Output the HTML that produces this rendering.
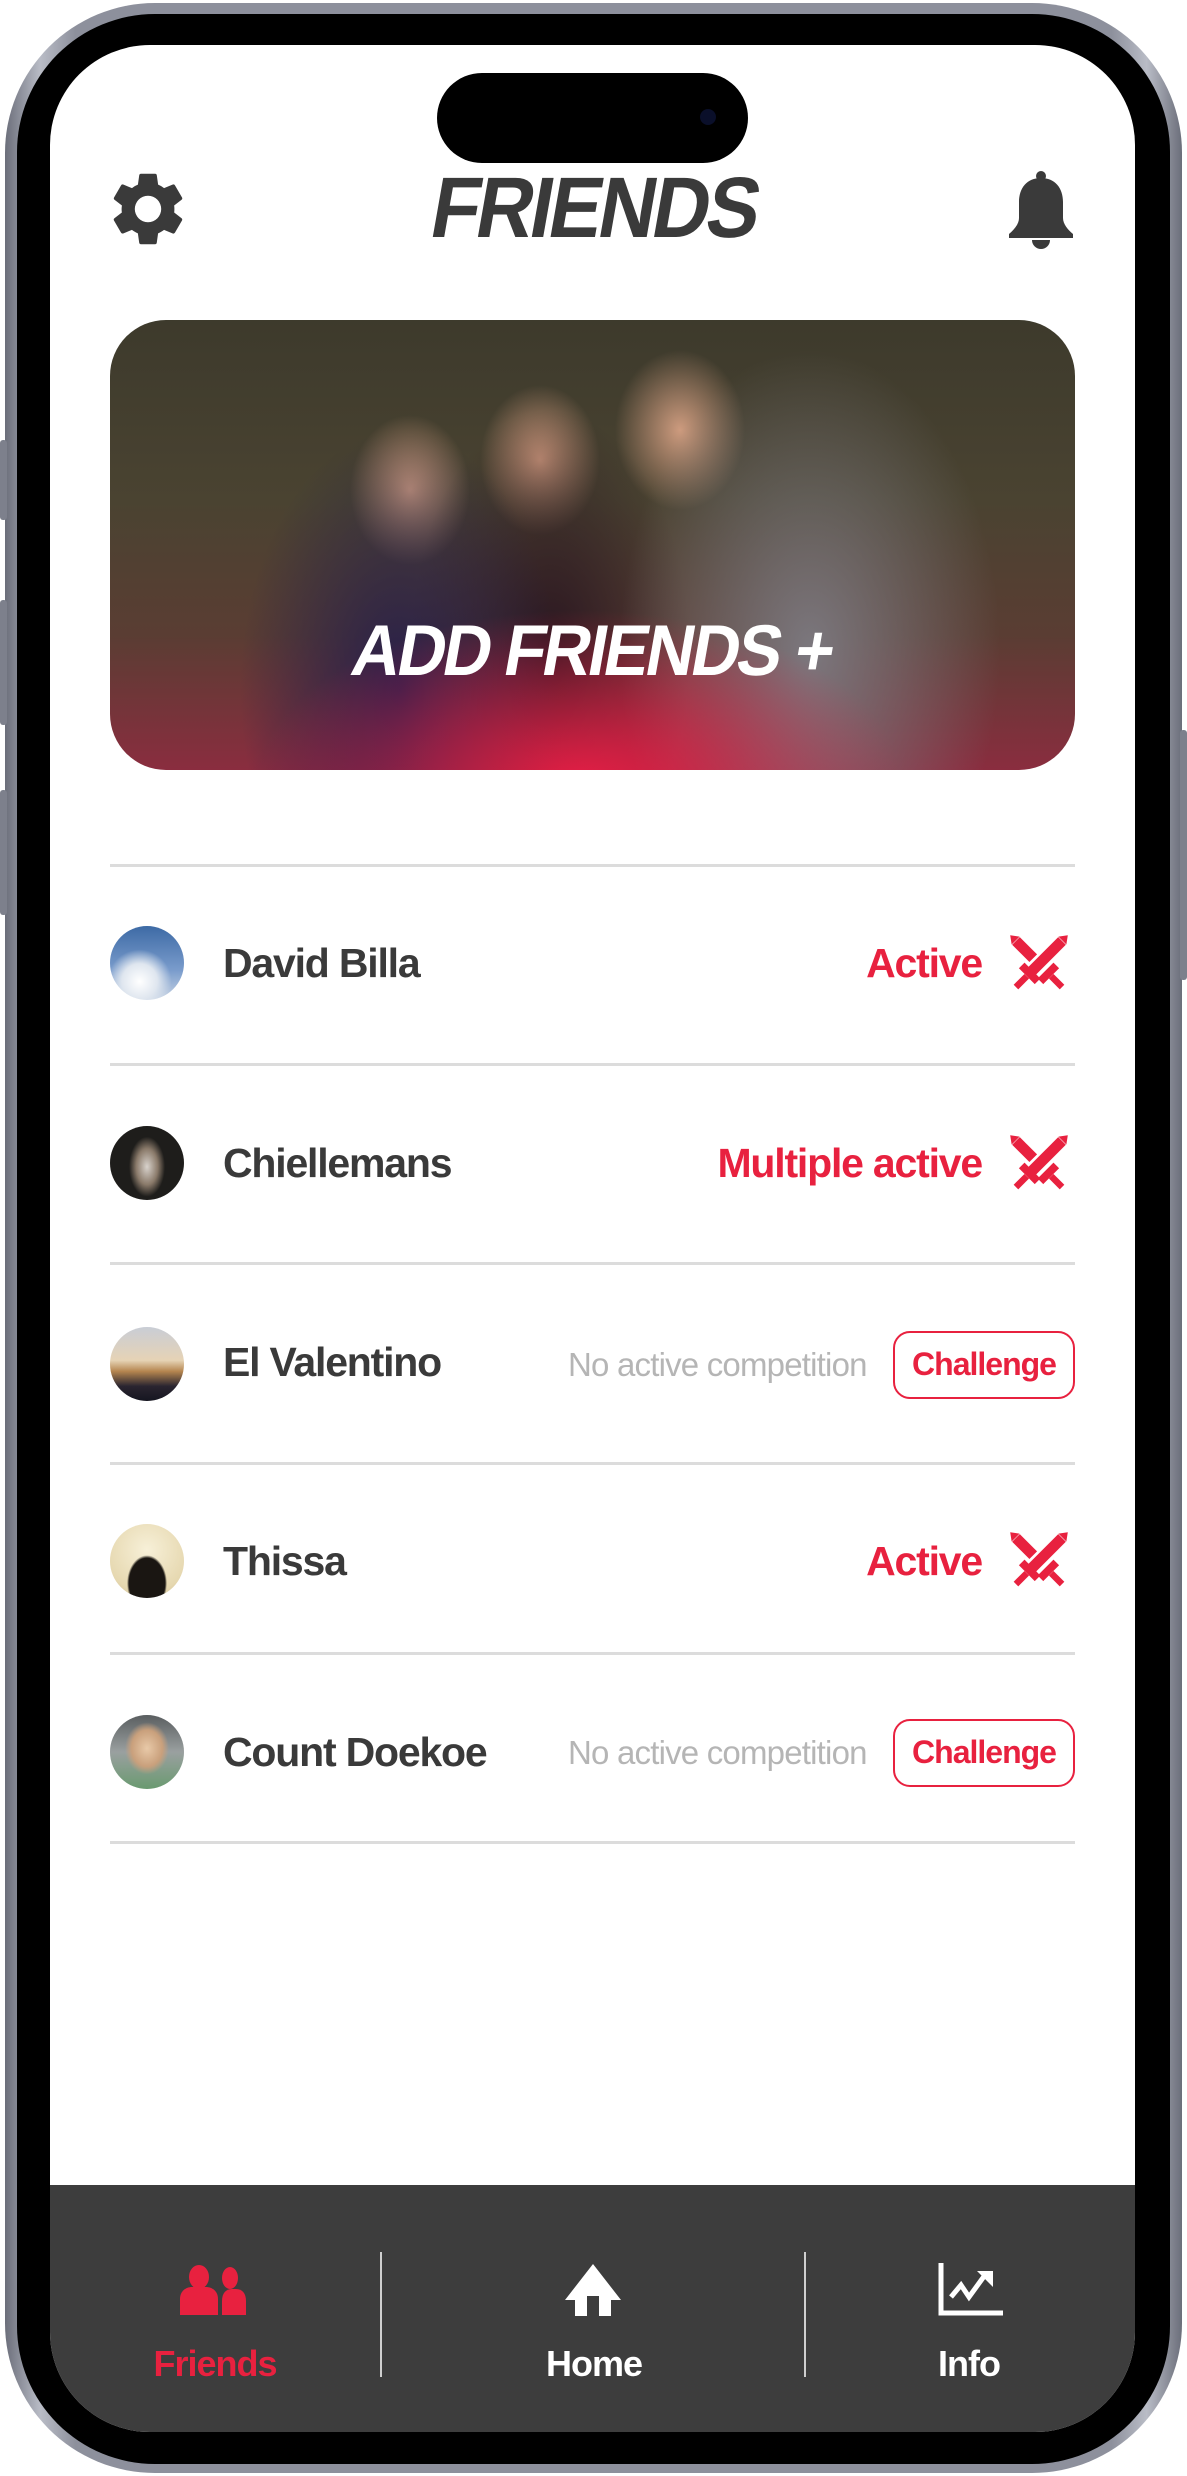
<!DOCTYPE html>
<html><head><meta charset="utf-8"><style>
*{margin:0;padding:0;box-sizing:border-box}
body{width:1187px;height:2476px;background:#fff;position:relative;overflow:hidden;font-family:"Liberation Sans",Arial,sans-serif}
.frame{position:absolute;left:5px;top:3px;width:1177px;height:2470px;border-radius:150px;background:linear-gradient(90deg,#6b6e7a,#b9bcc6 3%,#8d909c 6%,#8d909c 94%,#b9bcc6 97%,#6b6e7a)}
.bezel{position:absolute;left:17px;top:14px;width:1153px;height:2450px;border-radius:138px;background:#000}
.screen{position:absolute;left:50px;top:45px;width:1085px;height:2387px;border-radius:100px;background:#fff;overflow:hidden}
.island{position:absolute;left:437px;top:73px;width:311px;height:90px;border-radius:45px;background:#000}
.title{position:absolute;left:400px;top:166px;width:390px;text-align:center;font-weight:bold;font-size:86px;color:#3a3a3a;letter-spacing:-3.5px;transform:skewX(-10deg) scaleX(.92);line-height:84px}
.banner{position:absolute;left:110px;top:320px;width:965px;height:450px;border-radius:56px;overflow:hidden;
background:
radial-gradient(ellipse 320px 170px at 470px 460px,rgba(235,30,70,.95),rgba(235,30,70,0) 100%),
radial-gradient(ellipse 190px 300px at 700px 330px,rgba(125,123,130,.95),rgba(125,123,130,0) 100%),
radial-gradient(ellipse 160px 260px at 290px 370px,rgba(35,30,75,.98),rgba(35,30,75,0) 100%),
radial-gradient(ellipse 140px 240px at 440px 330px,rgba(40,22,32,.98),rgba(40,22,32,0) 100%),
radial-gradient(ellipse 60px 75px at 300px 170px,rgba(220,165,135,.9),rgba(220,165,135,0) 100%),
radial-gradient(ellipse 60px 75px at 430px 140px,rgba(225,165,135,.9),rgba(225,165,135,0) 100%),
radial-gradient(ellipse 65px 80px at 570px 110px,rgba(220,165,135,.9),rgba(220,165,135,0) 100%),
linear-gradient(180deg,#3d3a2c 0%,#4a4331 40%,#5a3d33 70%,#8a2d3f 100%)}
.banner span{position:absolute;left:0;right:0;top:290px;text-align:center;color:#fff;font-weight:bold;font-size:72px;letter-spacing:-3px;transform:skewX(-10deg) scaleX(.93)}
.sep{position:absolute;left:110px;width:965px;height:3px;background:#dcdcdc}
.av{position:absolute;left:110px;width:74px;height:74px;border-radius:50%}
.name{position:absolute;left:223px;font-size:41px;font-weight:bold;color:#3a3a3a;letter-spacing:-1.2px;line-height:48px}
.act{position:absolute;right:205px;font-size:41px;font-weight:bold;color:#e8213f;letter-spacing:-1.2px;line-height:48px;text-align:right}
.sw{position:absolute;left:1003px;width:72px;height:72px}
.none{position:absolute;left:568px;font-size:33px;color:#b5b5b5;letter-spacing:-0.8px;line-height:40px}
.btn{position:absolute;left:893px;width:182px;height:68px;border:2.5px solid #e8213f;border-radius:17px;color:#e8213f;font-weight:bold;font-size:32px;letter-spacing:-1px;text-align:center;line-height:62px}
.nav{position:absolute;left:50px;top:2185px;width:1085px;height:247px;background:#3d3d3d;border-radius:0 0 100px 100px}
.div{position:absolute;top:2252px;width:2px;height:125px;background:#cfcfcf}
.lab{position:absolute;top:2343px;width:200px;text-align:center;font-size:36px;font-weight:bold;letter-spacing:-1px;color:#fff}
</style></head><body>
<div class="frame"></div>
<div style="position:absolute;left:0;top:440px;width:7px;height:80px;background:#7d808c;border-radius:3px"></div>
<div style="position:absolute;left:0;top:600px;width:7px;height:125px;background:#7d808c;border-radius:3px"></div>
<div style="position:absolute;left:0;top:790px;width:7px;height:125px;background:#7d808c;border-radius:3px"></div>
<div style="position:absolute;right:0;top:730px;width:7px;height:250px;background:#7d808c;border-radius:3px"></div>
<div class="bezel"></div>
<div class="screen"></div>
<div class="island"></div>
<div style="position:absolute;left:700px;top:109px;width:16px;height:16px;border-radius:50%;background:#0a0f2a"></div>

<svg style="position:absolute;left:104px;top:165px" width="88" height="88" viewBox="0 0 24 24"><path fill="#3a3a3a" d="M19.14 12.94c.04-.3.06-.61.06-.94 0-.32-.02-.64-.07-.94l2.03-1.58a.49.49 0 0 0 .12-.61l-1.92-3.32a.49.49 0 0 0-.59-.22l-2.39.96c-.5-.38-1.03-.7-1.62-.94l-.36-2.54a.48.48 0 0 0-.48-.41h-3.84c-.24 0-.43.17-.47.41l-.36 2.54c-.59.24-1.13.57-1.620.94l-2.39-.96a.48.48 0 0 0-.59.22L2.74 8.87c-.12.21-.08.47.12.61l2.03 1.58c-.05.3-.09.63-.09.94s.02.64.07.94l-2.03 1.58a.49.49 0 0 0-.12.61l1.92 3.32c.12.22.37.29.59.22l2.39-.96c.5.38 1.03.7 1.62.94l.36 2.54c.05.24.24.41.48.41h3.84c.24 0 .44-.17.47-.41l.36-2.54c.59-.24 1.13-.56 1.62-.94l2.39.96c.22.08.47 0 .59-.22l1.92-3.32c.12-.22.07-.47-.12-.61l-2.010-1.58zM12 15.6A3.6 3.6 0 1 1 12 8.4a3.6 3.6 0 0 1 0 7.2z"/></svg>
<div class="title">FRIENDS</div>
<svg style="position:absolute;left:1005px;top:170px" width="72" height="80" viewBox="0 0 72 80"><circle cx="36" cy="6" r="5" fill="#3a3a3a"/><path fill="#3a3a3a" d="M36 8c-14 0-22 10-22 24v16c0 6-5 12-10 16v4h64v-4c-5-4-10-10-10-16V32C58 18 50 8 36 8z"/><path fill="#3a3a3a" d="M27 70h18a9 9 0 0 1-18 0z"/></svg>

<div class="banner"><span>ADD FRIENDS +</span></div>

<div class="sep" style="top:864px"></div>
<div class="sep" style="top:1063px"></div>
<div class="sep" style="top:1262px"></div>
<div class="sep" style="top:1462px"></div>
<div class="sep" style="top:1652px"></div>
<div class="sep" style="top:1841px"></div>

<div class="av" style="top:926px;background:radial-gradient(circle at 40% 75%,#fff 0,#dfe6ef 25%,transparent 45%),linear-gradient(180deg,#3d6aa5,#7a9ccc 60%,#c8d4e4)"></div>
<div class="name" style="top:939px">David Billa</div>
<div class="act" style="top:939px">Active</div>

<div class="av" style="top:1126px;background:radial-gradient(ellipse 18px 30px at 50% 55%,#d8d2cc,#8a7a6a 60%,transparent 100%),#1e1d1b"></div>
<div class="name" style="top:1139px">Chiellemans</div>
<div class="act" style="top:1139px">Multiple active</div>

<div class="av" style="top:1327px;background:linear-gradient(180deg,#c9cdd6 0%,#e6d3b5 45%,#b5854f 60%,#2a2530 80%,#151520 100%)"></div>
<div class="name" style="top:1338px">El Valentino</div>
<div class="none" style="top:1345px">No active competition</div>
<div class="btn" style="top:1331px">Challenge</div>

<div class="av" style="top:1524px;background:radial-gradient(ellipse 20px 28px at 50% 80%,#1a1612 90%,transparent 100%),radial-gradient(circle at 50% 35%,#f7f0d8,#e6d8b0 70%,#c9b88c)"></div>
<div class="name" style="top:1537px">Thissa</div>
<div class="act" style="top:1537px">Active</div>

<div class="av" style="top:1715px;background:radial-gradient(ellipse 22px 26px at 50% 45%,#e8c9a8,#c9a07c 70%,transparent 100%),linear-gradient(180deg,#5a5e60,#9aa0a0 50%,#6a9a70)"></div>
<div class="name" style="top:1728px">Count Doekoe</div>
<div class="none" style="top:1733px">No active competition</div>
<div class="btn" style="top:1719px">Challenge</div>

<svg class="sw" style="top:928px" viewBox="0 0 100 100"><g stroke="#e8213f" fill="none"><path d="M82 18 L40 60" stroke-width="15"/><path d="M26 52 L48 74" stroke-width="11"/><path d="M33 67 L18 82" stroke-width="9"/><path d="M18 18 L42 42" stroke-width="15"/><path d="M52 74 L74 52" stroke-width="11"/><path d="M67 67 L82 82" stroke-width="9"/></g><path d="M77 12 L90 10 L88 23Z M10 10 L23 12 L12 23Z" fill="#e8213f"/></svg>
<svg class="sw" style="top:1128px" viewBox="0 0 100 100"><g stroke="#e8213f" fill="none"><path d="M82 18 L40 60" stroke-width="15"/><path d="M26 52 L48 74" stroke-width="11"/><path d="M33 67 L18 82" stroke-width="9"/><path d="M18 18 L42 42" stroke-width="15"/><path d="M52 74 L74 52" stroke-width="11"/><path d="M67 67 L82 82" stroke-width="9"/></g><path d="M77 12 L90 10 L88 23Z M10 10 L23 12 L12 23Z" fill="#e8213f"/></svg>
<svg class="sw" style="top:1525px" viewBox="0 0 100 100"><g stroke="#e8213f" fill="none"><path d="M82 18 L40 60" stroke-width="15"/><path d="M26 52 L48 74" stroke-width="11"/><path d="M33 67 L18 82" stroke-width="9"/><path d="M18 18 L42 42" stroke-width="15"/><path d="M52 74 L74 52" stroke-width="11"/><path d="M67 67 L82 82" stroke-width="9"/></g><path d="M77 12 L90 10 L88 23Z M10 10 L23 12 L12 23Z" fill="#e8213f"/></svg>

<div class="nav"></div>
<div class="div" style="left:380px"></div>
<div class="div" style="left:804px"></div>
<svg style="position:absolute;left:178px;top:2265px" width="72" height="50" viewBox="0 0 72 50"><g fill="#e8213f"><ellipse cx="21" cy="12" rx="10" ry="12"/><path d="M2 50V34c0-8 6-12 12-12h14c6 0 12 4 12 12v16z"/><ellipse cx="52" cy="13" rx="8" ry="11"/><path d="M44 50V36c0-8 4-12 10-12h4c6 0 10 4 10 12v14z"/></g></svg>
<svg style="position:absolute;left:563px;top:2264px" width="60" height="52" viewBox="0 0 60 52"><path fill="#fff" d="M30 0 L58 36 H48 V52 H36 V32 H24 V52 H12 V36 H2Z"/></svg>
<svg style="position:absolute;left:937px;top:2263px" width="68" height="54" viewBox="0 0 68 54"><g fill="none" stroke="#fff" stroke-width="5"><path d="M4 0 V50 H66"/><path d="M14 34 L24 22 L32 34 L48 12"/></g><path fill="#fff" d="M40 8 H56 V24Z"/></svg>
<div class="lab" style="left:115px;color:#e8213f">Friends</div>
<div class="lab" style="left:494px">Home</div>
<div class="lab" style="left:869px">Info</div>
</body></html>
